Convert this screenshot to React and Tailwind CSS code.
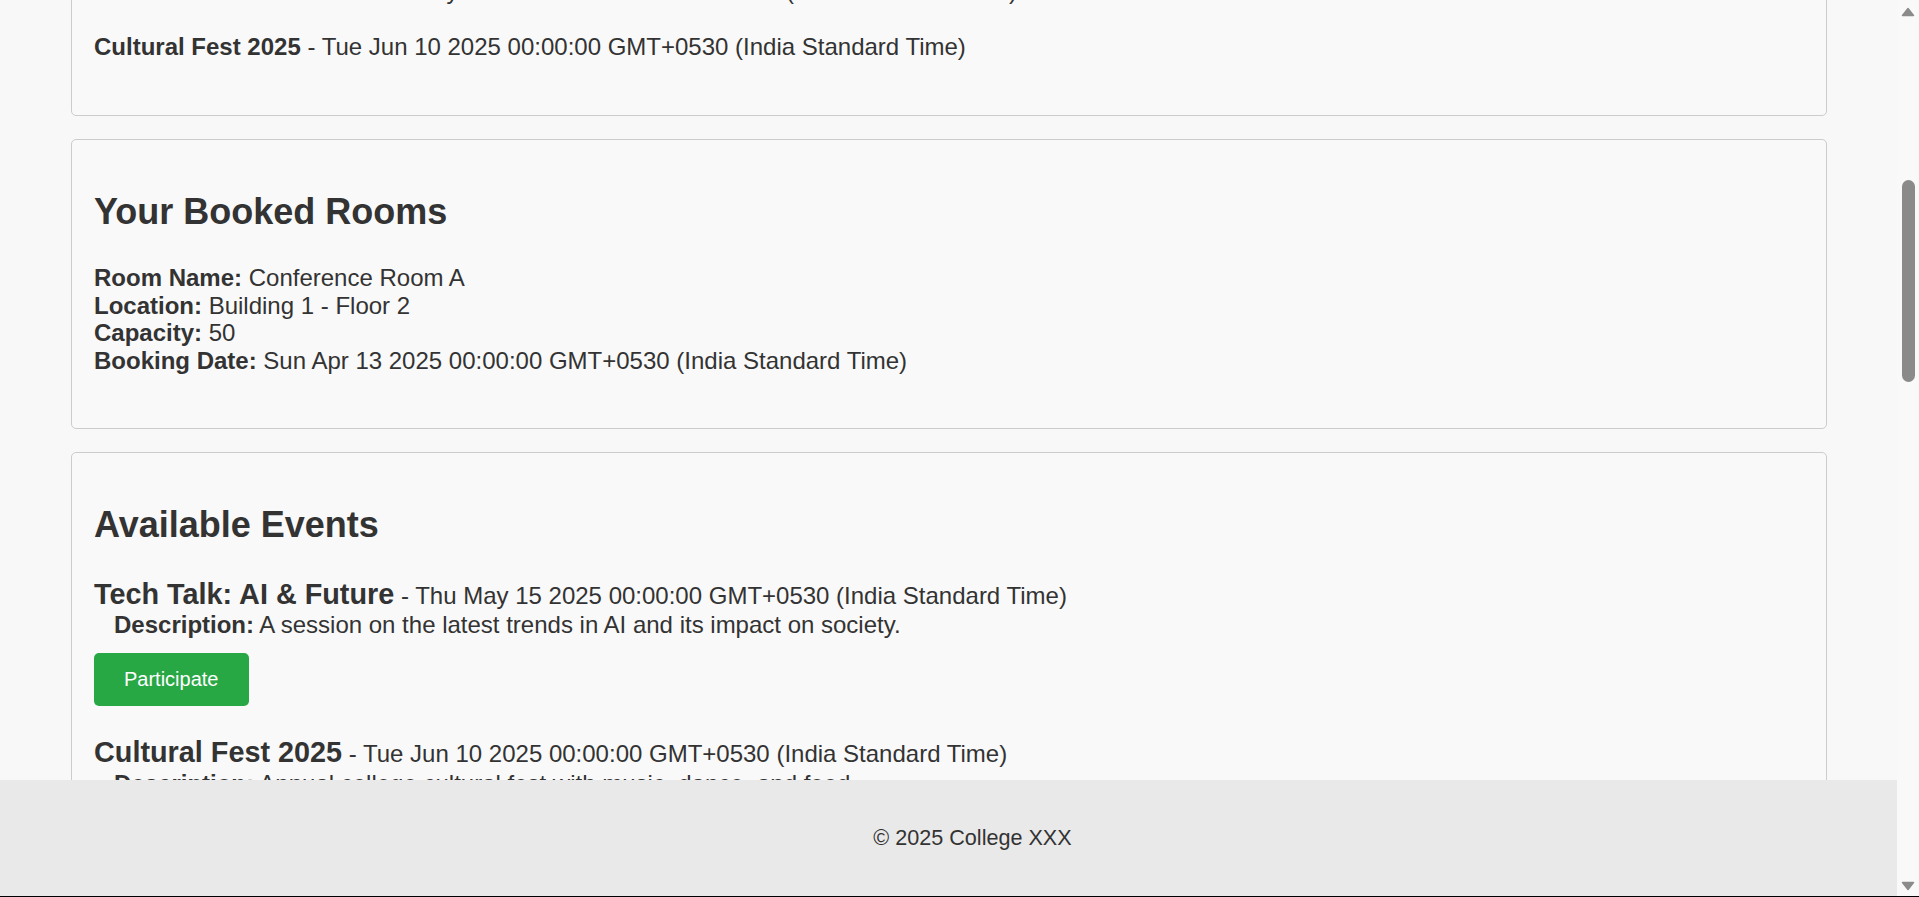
import React from 'react';

const registeredEvents = [
  { title: 'Tech Talk: AI & Future', date: 'Thu May 15 2025 00:00:00 GMT+0530 (India Standard Time)' },
  { title: 'Cultural Fest 2025', date: 'Tue Jun 10 2025 00:00:00 GMT+0530 (India Standard Time)' },
];

const availableEvents = [
  {
    id: 1,
    title: 'Tech Talk: AI & Future',
    date: 'Thu May 15 2025 00:00:00 GMT+0530 (India Standard Time)',
    description: 'A session on the latest trends in AI and its impact on society.',
  },
  {
    id: 2,
    title: 'Cultural Fest 2025',
    date: 'Tue Jun 10 2025 00:00:00 GMT+0530 (India Standard Time)',
    description: 'Annual college cultural fest with music, dance, and food.',
  },
];

const room = {
  name: 'Conference Room A',
  location: 'Building 1 - Floor 2',
  capacity: 50,
  date: 'Sun Apr 13 2025 00:00:00 GMT+0530 (India Standard Time)',
};

const Card = ({ title, children }) => (
  <section className="rounded-[5px] border border-[#cccccc] bg-[#f9f9f9] pl-[22px] pr-[20px] pt-[51px] pb-[54px]">
    <h2 className="mb-[32px] text-[36px] font-bold leading-[1.15]">{title}</h2>
    {children}
  </section>
);

const Arrow = ({ down }) => (
  <svg width="14" height="10" viewBox="0 0 14 10" className={down ? 'rotate-180' : ''}>
    <path d="M7 1.5 L12.5 8.5 L1.5 8.5 Z" fill="#8b8b8b" stroke="#8b8b8b" strokeWidth="1.5" strokeLinejoin="round" />
  </svg>
);

const App = () => {
  const handleParticipate = (id) => {
    console.log('participate', id);
  };

  return (
    <div className="flex h-screen w-full overflow-hidden border-b border-black bg-[#f8f8f8] font-['Liberation_Sans',Arial,sans-serif] text-[24px] leading-[1.15] text-[#333333]">
      <div className="relative flex-1 overflow-hidden">
        {/* page is shown scrolled part way down */}
        <main className="-mt-[148px] flex flex-col gap-[23px] pl-[71px] pr-[70px]">
          <Card title="Your Registered Events">
            <div className="flex flex-col gap-[28px]">
              {registeredEvents.map((ev) => (
                <p key={ev.title}>
                  <strong>{ev.title}</strong> - {ev.date}
                </p>
              ))}
            </div>
          </Card>

          <Card title="Your Booked Rooms">
            <p><strong>Room Name:</strong> {room.name}</p>
            <p><strong>Location:</strong> {room.location}</p>
            <p><strong>Capacity:</strong> {room.capacity}</p>
            <p><strong>Booking Date:</strong> {room.date}</p>
          </Card>

          <Card title="Available Events">
            <div className="flex flex-col gap-[30px]">
              {availableEvents.map((ev) => (
                <div key={ev.id}>
                  <p>
                    <strong className="text-[28.8px]">{ev.title}</strong> - {ev.date}
                  </p>
                  <p className="ml-[20px]">
                    <strong>Description:</strong> {ev.description}
                  </p>
                  <button
                    className="mt-[15px] rounded-[5px] bg-[#28a745] px-[30px] py-[15px] text-[20px] leading-[23px] text-white"
                    onClick={() => handleParticipate(ev.id)}
                  >
                    Participate
                  </button>
                </div>
              ))}
            </div>
          </Card>
        </main>

        <footer className="absolute inset-x-0 bottom-0 flex h-[116px] items-center justify-center bg-[#e9e9e9] pl-[48px] text-[21.6px]">
          © 2025 College XXX
        </footer>
      </div>

      {/* scrollbar */}
      <div className="flex w-[22px] flex-col items-center bg-[#f9f9f9]">
        <div className="mt-[7px]">
          <Arrow />
        </div>
        <div className="mt-[163px] h-[202px] w-[13px] rounded-full bg-[#8a8a8a]" />
        <div className="flex-1" />
        <div className="mb-[5px]">
          <Arrow down />
        </div>
      </div>
    </div>
  );
};

export default App;
